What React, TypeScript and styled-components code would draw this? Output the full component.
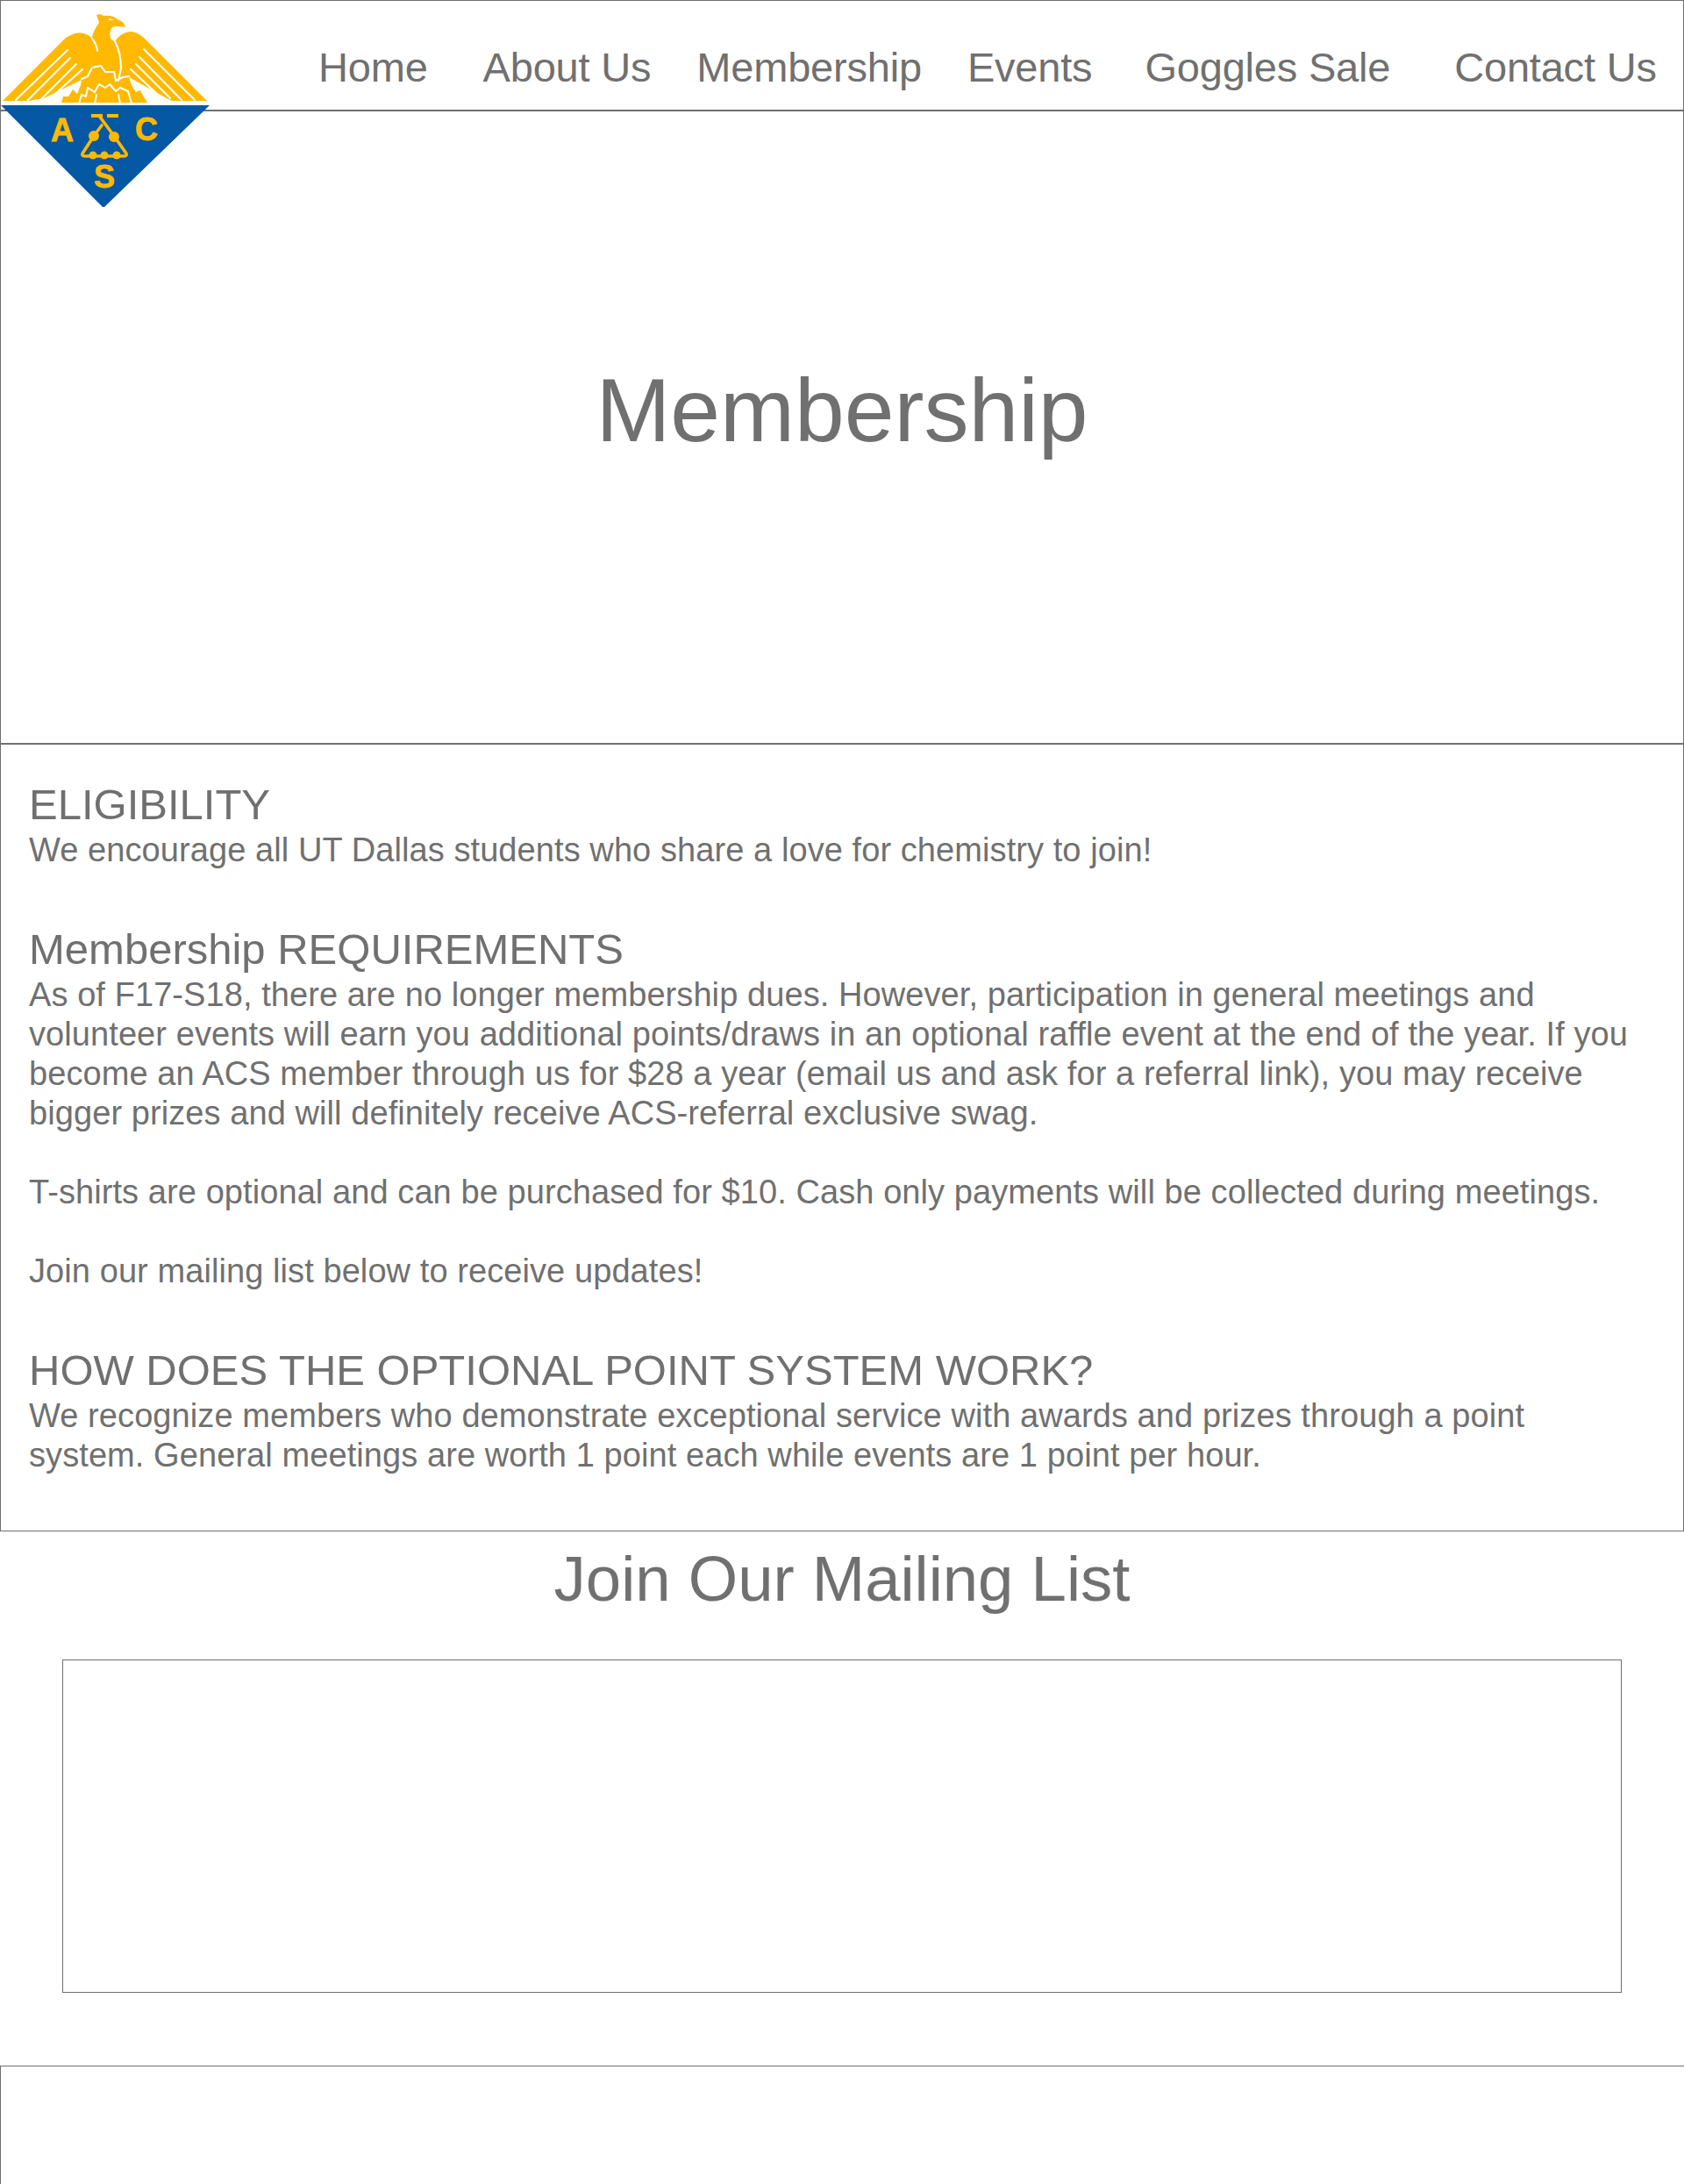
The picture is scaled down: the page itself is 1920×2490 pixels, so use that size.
import styled, { createGlobalStyle } from "styled-components";

const NAV_ITEMS = [
  { label: "Home", gap: 0 },
  { label: "About Us", gap: 63 },
  { label: "Membership", gap: 52 },
  { label: "Events", gap: 52 },
  { label: "Goggles Sale", gap: 60 },
  { label: "Contact Us", gap: 73 },
];

const Logo = () => (
  <LogoSvg viewBox="0 0 240 240" width="240" height="240" aria-label="ACS logo">
    {/* eagle */}
    <path
      d="M3 115 L75 43 Q90 33 102 41 Q108 46 110 54 L105 42 Q107 34 113 26 L110 17 L114 16 L118 18 Q128 17 134 22 Q142 25 143 31 Q135 29 128 31 Q124 36 126 44 L131 48 Q136 38 148 36 Q157 36 166 45 L236 115 L196 115 L190 112 L147 88 L150 97 L155 105 L160 103 L163 109 L168 117 L70 117 L72 110 L78 110 L83 102 L88 107 L92 97 L93 91 L50 112 L33 115 Z"
      fill="#ffb900"
    />
    {/* white cuts: body edges, feathers, flames */}
    <g stroke="#fff" strokeWidth="2" strokeLinecap="round" strokeLinejoin="round" fill="none">
      <path d="M105 44 Q110 50 111 58" />
      <path d="M131 47 Q138 60 138 78 L135 92" />
      <path d="M18 114 L77 57" />
      <path d="M32 114 L80 66" />
      <path d="M47 113 L87 73" />
      <path d="M63 107 L94 79" />
      <path d="M222 114 L164 56" />
      <path d="M207 114 L159 65" />
      <path d="M194 112 L155 73" />
      <path d="M180 108 L149 79" />
      <path d="M93 90 L100 87 L105 77 L115 75 L120 82 L130 82 L132 92 L140 88 L147 87" />
      <path d="M90 118 L93 108 L98 110 L100 100 L108 105 L113 96 L120 100 L125 96 L132 104 L137 100 L146 104 L150 118" />
      <path d="M108 118 L110 108" />
      <path d="M137 118 L135 108" />
    </g>
    <path d="M125 21 L130 23 L123 23 Z" fill="#fff" />
    {/* shield */}
    <path d="M1 120 L239 120 L119 236 L117 236 Z" fill="#0558a4" />
    <g fill="#ffb900" stroke="#ffb900" strokeWidth="0.8" fontFamily="'Liberation Sans', Arial, sans-serif" fontWeight="700" fontSize="36">
      <text x="58" y="161">A</text>
      <text x="154" y="160">C</text>
      <text x="107" y="214">S</text>
    </g>
    {/* flask */}
    <g stroke="#ffb900" fill="none" strokeWidth="3.6" strokeLinecap="round" strokeLinejoin="round">
      <path d="M104 132 L117 132 M122 132 L135 132" strokeWidth="4" strokeLinecap="butt" />
      <path d="M113 132 L130 155 L144 175 Q145 178 141 178 L97 178 Q93 178 94 175 L107 155 L116 143" />
    </g>
    <g fill="#ffb900">
      <circle cx="107" cy="155" r="6" />
      <circle cx="130" cy="156" r="6" />
      <circle cx="106" cy="177" r="4.5" />
      <circle cx="119" cy="177" r="4.5" />
      <circle cx="133" cy="177" r="4.5" />
    </g>
  </LogoSvg>
);

const App = () => {
  return (
    <Page>
      <GlobalStyle />
      <Logo />
      <TopSection>
        <NavBar>
          {NAV_ITEMS.map((item) => (
            <NavLink key={item.label} $gap={item.gap}>
              {item.label}
            </NavLink>
          ))}
        </NavBar>
        <Hero>
          <HeroTitle>Membership</HeroTitle>
        </Hero>
      </TopSection>
      <InfoSection>
        <InfoBlock>
          <InfoTitle>ELIGIBILITY</InfoTitle>
          <InfoText>We encourage all UT Dallas students who share a love for chemistry to join!</InfoText>
        </InfoBlock>
        <InfoBlock>
          <InfoTitle>Membership REQUIREMENTS</InfoTitle>
          <InfoText>
            As of F17-S18, there are no longer membership dues. However, participation in general meetings and
            <br />
            volunteer events will earn you additional points/draws in an optional raffle event at the end of the year. If you
            <br />
            become an ACS member through us for $28 a year (email us and ask for a referral link), you may receive
            <br />
            bigger prizes and will definitely receive ACS-referral exclusive swag.
            <br />
            <br />
            T-shirts are optional and can be purchased for $10. Cash only payments will be collected during meetings.
            <br />
            <br />
            Join our mailing list below to receive updates!
          </InfoText>
        </InfoBlock>
        <InfoBlock>
          <InfoTitle>HOW DOES THE OPTIONAL POINT SYSTEM WORK?</InfoTitle>
          <InfoText>
            We recognize members who demonstrate exceptional service with awards and prizes through a point
            <br />
            system. General meetings are worth 1 point each while events are 1 point per hour.
          </InfoText>
        </InfoBlock>
      </InfoSection>
      <MailingSection>
        <MailingTitle>Join Our Mailing List</MailingTitle>
        <FormFrame />
      </MailingSection>
      <FooterSection />
    </Page>
  );
};

export default App;

const GlobalStyle = createGlobalStyle`
  html, body {
    margin: 0;
    padding: 0;
    background-color: #fff;
  }
  * {
    box-sizing: border-box;
  }
`;

const Page = styled.div`
  position: relative;
  width: 1920px;
  height: 2490px;
  overflow: hidden;
  font-family: "Liberation Sans", Arial, sans-serif;
  color: #707070;
  background-color: #fff;
`;

const LogoSvg = styled.svg`
  position: absolute;
  top: 0;
  left: 0;
`;

const TopSection = styled.section`
  height: 847px;
  border: 1px solid #707070;
  border-bottom: none;
`;

const NavBar = styled.nav`
  display: flex;
  align-items: center;
  height: 126px;
  padding: 26px 0 0 362px;
  border-bottom: 2px solid #707070;
`;

const NavLink = styled.a<{ $gap: number }>`
  margin-left: ${(props) => props.$gap}px;
  font-size: 47px;
  letter-spacing: -0.2px;
  white-space: nowrap;
`;

const Hero = styled.div`
  display: flex;
  justify-content: center;
  padding-top: 281px;
`;

const HeroTitle = styled.h1`
  margin: 0;
  font-size: 102px;
  font-weight: 400;
  line-height: 120px;
`;

const InfoSection = styled.section`
  display: flex;
  flex-direction: column;
  gap: 61px;
  height: 899px;
  padding: 39px 32px 0;
  border: 1px solid #707070;
  border-top-width: 2px;
`;

const InfoBlock = styled.div``;

const InfoTitle = styled.h2`
  margin: 0;
  font-size: 49px;
  font-weight: 400;
  line-height: 59px;
`;

const InfoText = styled.p`
  margin: 0;
  font-size: 38px;
  letter-spacing: 0.08px;
  line-height: 45px;
  white-space: nowrap;
`;

const MailingSection = styled.section`
  display: flex;
  flex-direction: column;
  align-items: center;
  height: 609px;
  padding-top: 10px;
`;

const MailingTitle = styled.h2`
  margin: 0 0 49px;
  font-size: 72.5px;
  font-weight: 400;
  line-height: 87px;
`;

const FormFrame = styled.div`
  width: 1778px;
  height: 380px;
  border: 1px solid #707070;
`;

const FooterSection = styled.section`
  height: 135px;
  border-top: 1px solid #707070;
  border-left: 1px solid #707070;
`;
